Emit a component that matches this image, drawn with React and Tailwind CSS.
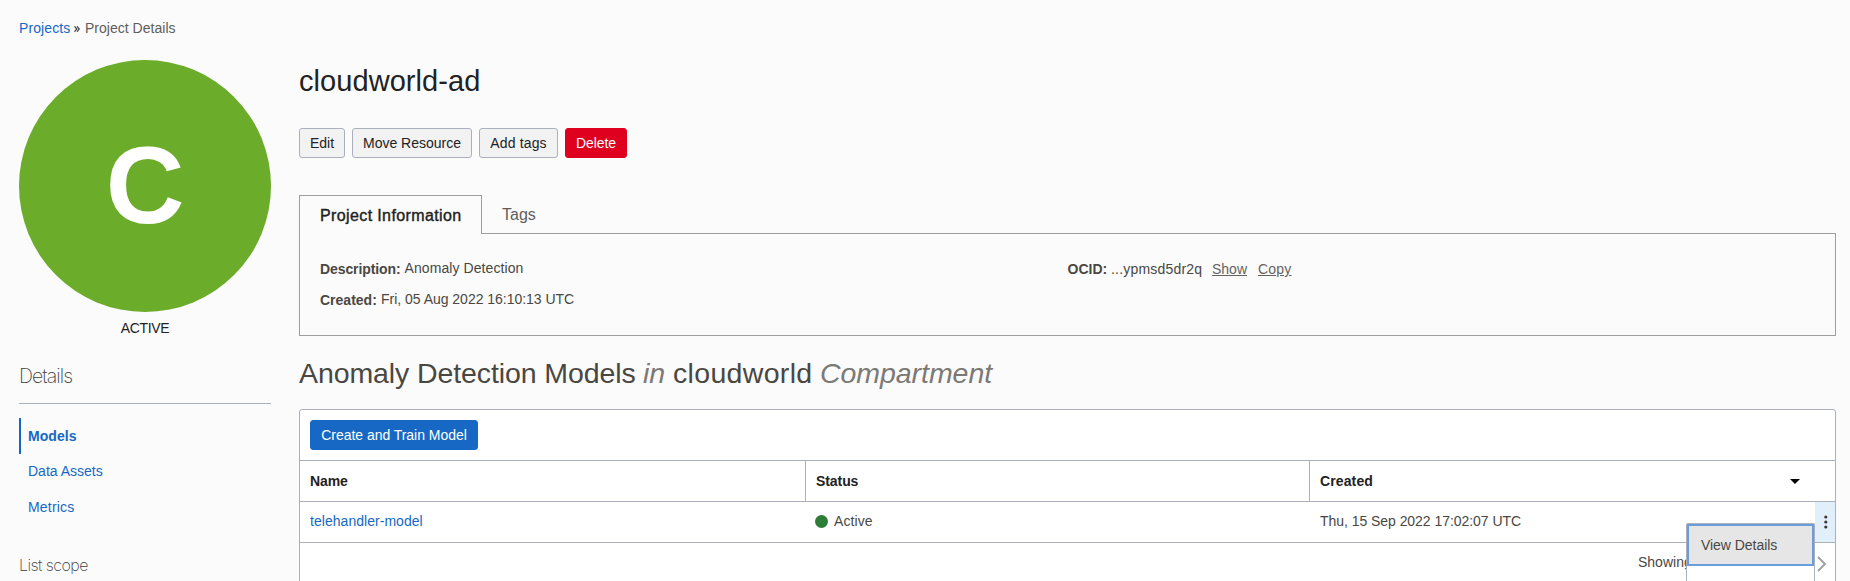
import React from "react";

function Button({ className = "", tracking = "", children }) {
  return (
    <button
      className={`flex h-[30px] items-center justify-center rounded-[3px] border text-[14px] leading-[20px] ${className}`}
    >
      <span className={tracking}>{children}</span>
    </button>
  );
}

function Sidebar() {
  return (
    <aside className="flex w-[252px] shrink-0 flex-col">
      <div className="flex h-[20px] items-center whitespace-pre text-[14px] leading-[20px]">
        <a className="w-[51px] tracking-[0.1px] text-[#1668c4]">Projects</a>
        <svg className="ml-[4px] mt-[1px] h-[6px] w-[6px]" viewBox="0 0 6 6" fill="none" stroke="#444" strokeWidth="1.2">
          <path d="M0.5 0.3 2.8 3 0.5 5.7M3 0.3 5.3 3 3 5.7" />
        </svg>
        <span className="ml-[5px] tracking-[0.02px] text-[#5f5d5b]">Project Details</span>
      </div>

      <div className="mt-[22px] flex h-[252px] w-[252px] items-center justify-center rounded-full bg-[#6cac2b]">
        <span className="pb-[3px] text-[109px] leading-[120px] font-bold text-white">C</span>
      </div>
      <div className="mt-[6px] text-center text-[14px] leading-[20px] tracking-[-0.35px] text-[#222]">ACTIVE</div>

      <h2 className="mt-[26px] font-['Inter',sans-serif] text-[19.5px] leading-[24px] font-extralight tracking-[-0.95px] text-[#3f3d3b]">
        Details
      </h2>
      <div className="mt-[15px] h-px bg-[#aab1bd]" />

      <nav className="mt-[14px] flex flex-col text-[14px] text-[#1668c4]">
        <a className="flex h-[36px] items-center border-l-2 border-[#1668c4] pl-[7px] font-bold tracking-[0.05px]">Models</a>
        <a className="flex h-[35px] items-center pl-[9px]">Data Assets</a>
        <a className="flex h-[36px] items-center pl-[9px] tracking-[0.2px]">Metrics</a>
      </nav>

      <h3 className="mt-[30px] font-['Inter',sans-serif] text-[16px] leading-[20px] font-extralight tracking-[-0.55px] text-[#3f3d3b]">
        List scope
      </h3>
    </aside>
  );
}

function InfoPanel() {
  return (
    <section className="mt-[37px] flex flex-col">
      <div className="flex h-[39px]">
        <div className="flex w-[183px] border border-b-0 border-[#9e9e9e] pt-[10px] pl-[20px] text-[16px] leading-[20px] tracking-[0.38px] whitespace-nowrap text-[#222] [-webkit-text-stroke:0.4px_#222]">
          Project Information
        </div>
        <div className="flex grow border-b border-[#9e9e9e] pt-[10px] pl-[20px] text-[16px] leading-[20px] text-[#5f5d5b]">
          Tags
        </div>
      </div>
      <div className="flex h-[102px] border border-t-0 border-[#9e9e9e] pt-[25px] pl-[20px] text-[14px] leading-[20px] text-[#4a4742]">
        <div className="flex w-[747.5px] flex-col gap-[11px]">
          <div className="flex">
            <b className="w-[84.5px] tracking-[-0.1px]">Description:</b>
            <span className="-mt-px tracking-[0.08px]">Anomaly Detection</span>
          </div>
          <div className="flex">
            <b className="w-[61px]">Created:</b>
            <span className="-mt-px tracking-[-0.02px]">Fri, 05 Aug 2022 16:10:13 UTC</span>
          </div>
        </div>
        <div className="flex">
          <b className="w-[43.5px]">OCID:</b>
          <span className="w-[101px] tracking-[0.2px]">...ypmsd5dr2q</span>
          <a className="w-[46px] text-[#66635f]"><span className="underline">Show</span></a>
          <a className="tracking-[0.2px] text-[#66635f] underline">Copy</a>
        </div>
      </div>
    </section>
  );
}

function ModelsTable() {
  return (
    <section className="mt-[18px] flex h-[220px] shrink-0 flex-col rounded-t-[3px] border border-[#aab1bd] bg-white text-[14px] leading-[20px]">
      <div className="flex h-[51px] border-b border-[#aab1bd] pt-[10px] pl-[10px]">
        <Button className="w-[168px] border-[#1668c4] bg-[#1668c4] text-white" tracking="tracking-[-0.04px]">
          Create and Train Model
        </Button>
      </div>
      <div className="flex h-[41px] items-center border-b border-[#aab1bd] font-bold text-[#222]">
        <div className="w-[505px] pl-[10px] tracking-[-0.1px]">Name</div>
        <div className="flex h-full w-[504px] items-center border-l border-[#aab1bd] pl-[10px] tracking-[-0.08px]">Status</div>
        <div className="flex h-full grow items-center justify-between border-l border-[#aab1bd] pr-[35px] pl-[10px]">
          <span className="tracking-[0.12px]">Created</span>
          <svg className="h-[5px] w-[10px]" viewBox="0 0 10 5">
            <path d="M0 0h10L5 5z" fill="#000" />
          </svg>
        </div>
      </div>
      <div className="flex h-[41px] border-b border-[#aab1bd] text-[#4a4742]">
        <a className="w-[505px] pt-[9px] pl-[10px] tracking-[0.04px] text-[#1668c4]">telehandler-model</a>
        <div className="flex w-[504px] pt-[9px] pl-[10px]">
          <span className="mt-[4px] mr-[6px] h-[13px] w-[13px] rounded-full bg-[#2e7d37]" />
          <span className="tracking-[0.1px]">Active</span>
        </div>
        <div className="grow pt-[9px] pl-[11px] tracking-[-0.045px]">Thu, 15 Sep 2022 17:02:07 UTC</div>
        <div className="flex w-[20px] items-center justify-center bg-[#e1effa]">
          <svg className="h-[14px] w-[5px]" viewBox="0 0 5 14" fill="#3c3935">
            <circle cx="2.8" cy="2" r="1.6" />
            <circle cx="2.8" cy="7" r="1.6" />
            <circle cx="2.8" cy="12" r="1.6" />
          </svg>
        </div>
      </div>
      <div className="flex grow justify-between pl-[1338px] text-[#4a4742]">
        <span className="pt-[9px]">Showing</span>
        <svg className="mt-[13px] mr-[8px] h-[16px] w-[10px]" viewBox="0 0 10 16" fill="none" stroke="#9e9e9e" strokeWidth="1.8">
          <path d="M1 1 8 8 1 15" />
        </svg>
      </div>
    </section>
  );
}

function RowMenu() {
  return (
    <div className="absolute top-[523px] left-[1686px] h-[60px] w-[129px] rounded-t-[2px] border border-b-0 border-[#aab1bd] bg-white">
      <div className="flex h-[42px] items-center border-2 border-[#6a9edb] bg-[#e6e6e6] pl-[12px] text-[14px] leading-[20px] tracking-[-0.04px] text-[#4a4742]">
        View Details
      </div>
    </div>
  );
}

export default function App() {
  return (
    <div className="relative flex h-[581px] w-[1850px] gap-[28px] overflow-hidden bg-[#fbfbfb] pt-[18px] pl-[19px] font-['Liberation_Sans',Arial,sans-serif]">
      <Sidebar />
      <main className="flex w-[1537px] shrink-0 flex-col pt-[45px]">
        <h1 className="text-[29px] leading-[36px] tracking-[0.06px] text-[#222]">cloudworld-ad</h1>
        <div className="mt-[29px] flex gap-[7px] text-[#222]">
          <Button className="w-[46px] border-[#aab1bd] bg-[#f2f2f2]">Edit</Button>
          <Button className="w-[120px] border-[#aab1bd] bg-[#f2f2f2]">Move Resource</Button>
          <Button className="w-[79px] border-[#aab1bd] bg-[#f2f2f2]" tracking="tracking-[0.15px]">Add tags</Button>
          <Button className="w-[62px] border-[#df001f] bg-[#df001f] text-white" tracking="tracking-[-0.1px]">Delete</Button>
        </div>
        <InfoPanel />
        <h2 className="mt-[19px] flex text-[28.5px] leading-[36px] whitespace-nowrap text-[#4a4742]">
          <span className="w-[344px] tracking-[-0.1px]">Anomaly Detection Models</span>
          <i className="w-[30px] text-[#7b7976]">in</i>
          <span className="w-[147px] tracking-[0.33px]">cloudworld</span>
          <i className="tracking-[-0.05px] text-[#7b7976]">Compartment</i>
        </h2>
        <ModelsTable />
      </main>
      <RowMenu />
    </div>
  );
}
